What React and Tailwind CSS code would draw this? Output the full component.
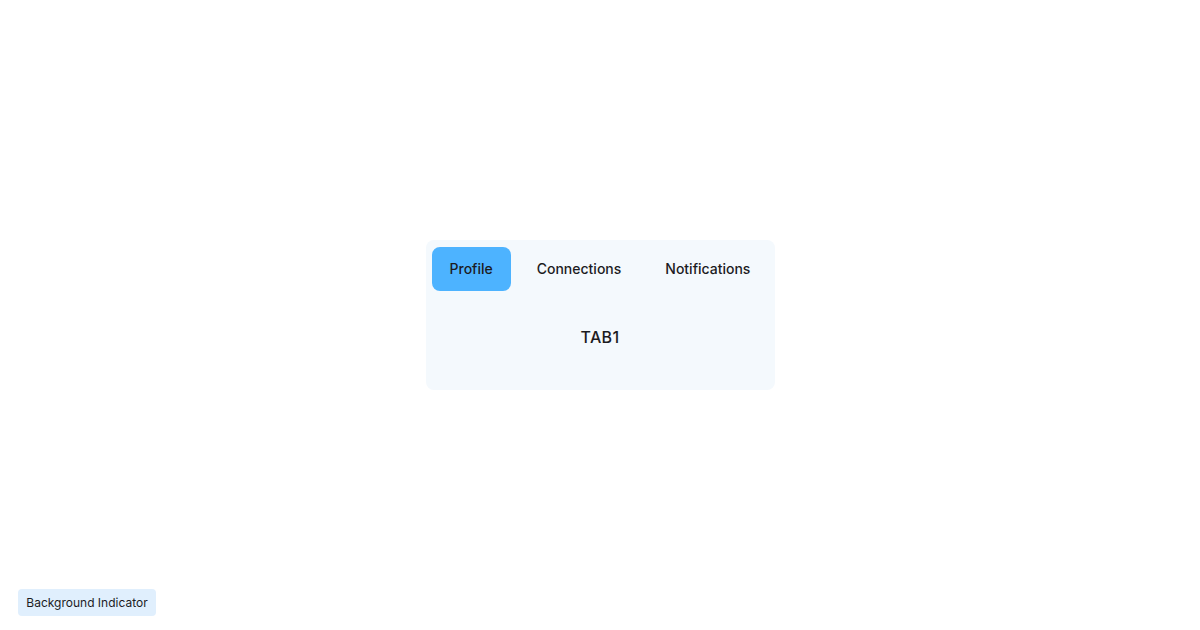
export default function App() {
  const tabs = ["Profile", "Connections", "Notifications"];
  return (
    <div className="relative w-[1200px] h-[630px] bg-white flex items-center justify-center" style={{ fontFamily: "Inter, 'Noto Sans', sans-serif" }}>
      <div className="w-[349px] rounded-lg bg-[#f4f9fd] p-1.5 pt-[7px] text-[#1c1c1f]">
        <div className="flex gap-2">
          {tabs.map((t, i) => (
            <div
              key={t}
              className={
                i === 0
                  ? "px-[18px] py-3 text-sm leading-5 font-medium rounded-lg bg-[#4db3ff]"
                  : "px-[18px] py-3 text-sm leading-5 font-medium rounded-lg"
              }
            >
              {t}
            </div>
          ))}
        </div>
        <div className="pt-[34px] pb-[35px] text-center text-base leading-6 font-medium tracking-[0.02em]">TAB1</div>
      </div>
      <div className="absolute left-[18px] bottom-[14px] h-[27px] w-[138px] flex items-center justify-center rounded bg-[#e0effd] text-xs text-[#1c1c1f]">
        Background Indicator
      </div>
    </div>
  );
}
